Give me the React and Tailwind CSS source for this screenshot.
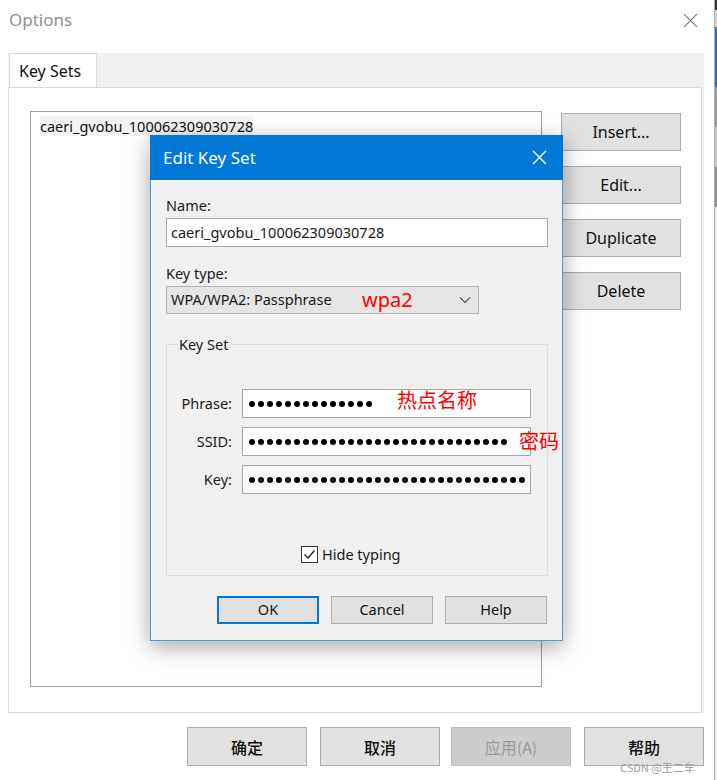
import React from 'react';

const FONT = { fontFamily: '"Noto Sans", "Open Sans", "Noto Sans CJK SC", sans-serif' };

const Btn = ({ children, className = '' }) => (
    <div className={`flex items-center justify-center bg-[#e1e1e1] border border-[#adadad] text-[#111] ${className}`}>
        {children}
    </div>
);

const Dots = ({ count }) => (
    <div className="flex items-center gap-[3px] overflow-hidden">
        {Array.from({ length: count }).map((_, i) => (
            <div key={i} className="w-[6px] h-[6px] shrink-0 rounded-full bg-black" />
        ))}
    </div>
);

const CloseX = ({ size = 14, color = '#666', width = 1.2 }) => (
    <svg width={size} height={size} viewBox="0 0 14 14">
        <path d="M1 1 L13 13 M13 1 L1 13" stroke={color} strokeWidth={width} fill="none" />
    </svg>
);

const EditKeySet = () => (
    <div className="absolute left-[150px] top-[135px] w-[413px] shadow-[0_6px_22px_rgba(0,0,0,0.35)]">
        {/* Title bar */}
        <div className="h-[45px] bg-[#0078d7] flex items-center justify-between pl-[13px] pr-[16px]">
            <span className="text-white text-[17px]">Edit Key Set</span>
            <CloseX size={15} color="#ffffff" width={1.3} />
        </div>

        {/* Body */}
        <div className="bg-[#f0f0f0] border-x border-b border-[#4a9bd9] px-[15px] pt-[16px] pb-[16px] flex flex-col text-[14.5px] text-[#1a1a1a]">
            <div className="h-[18px] leading-[18px]">Name:</div>
            <div className="mt-[4px] h-[29px] w-[382px] bg-white border border-[#a8a8a8] flex items-center pl-[4px]">
                caeri_gvobu_100062309030728
            </div>

            <div className="mt-[17px] h-[18px] leading-[18px]">Key type:</div>
            <div className="relative mt-[4px] h-[28px] w-[313px] bg-[#e5e5e5] border border-[#b4b4b4] flex items-center justify-between pl-[4px] pr-[7px]">
                <span>WPA/WPA2: Passphrase</span>
                <svg width="12" height="8" viewBox="0 0 12 8">
                    <path d="M1 1.5 L6 6.5 L11 1.5" stroke="#555" strokeWidth="1.2" fill="none" />
                </svg>
                <span className="absolute left-[195px] top-[-2px] text-[#ff0000] text-[20px] leading-[30px]">wpa2</span>
            </div>

            {/* Key Set group */}
            <div className="relative mt-[30px] h-[232px] w-[382px] border border-[#dcdcdc] flex flex-col">
                <span className="absolute left-[11px] top-[-10px] bg-[#f0f0f0] px-[1px] leading-[18px]">Key Set</span>

                <div className="mt-[44px] flex flex-col gap-[9px]">
                    <div className="relative flex items-center">
                        <span className="w-[65px] text-right">Phrase:</span>
                        <div className="ml-[10px] h-[29px] w-[289px] bg-white border border-[#a8a8a8] flex items-center pl-[6px]">
                            <Dots count={14} />
                        </div>
                        <span className="absolute left-[230px] top-[-4px] whitespace-nowrap text-[#ff0000] text-[20px] leading-[30px]" style={{ fontFamily: '"Noto Sans CJK SC", sans-serif' }}>热点名称</span>
                    </div>
                    <div className="relative flex items-center">
                        <span className="w-[65px] text-right">SSID:</span>
                        <div className="ml-[10px] h-[29px] w-[289px] bg-white border border-[#a8a8a8] flex items-center pl-[6px]">
                            <Dots count={29} />
                        </div>
                        <span className="absolute left-[352px] top-[-1px] whitespace-nowrap text-[#ff0000] text-[20px] leading-[30px]" style={{ fontFamily: '"Noto Sans CJK SC", sans-serif' }}>密码</span>
                    </div>
                    <div className="flex items-center">
                        <span className="w-[65px] text-right">Key:</span>
                        <div className="ml-[10px] h-[29px] w-[289px] bg-[#f7f7f7] border border-[#a8a8a8] flex items-center pl-[6px] pr-[2px] overflow-hidden">
                            <Dots count={32} />
                        </div>
                    </div>
                </div>

                <div className="mt-[50px] flex items-center pl-[134px]">
                    <div className="w-[17px] h-[17px] bg-white border border-[#333] flex items-center justify-center">
                        <svg width="13" height="11" viewBox="0 0 13 11">
                            <path d="M1.5 5.5 L5 9 L11.5 1.5" stroke="#222" strokeWidth="1.4" fill="none" />
                        </svg>
                    </div>
                    <span className="ml-[4px]">Hide typing</span>
                </div>
            </div>

            {/* Buttons */}
            <div className="mt-[20px] flex justify-end gap-[12px]">
                <div className="w-[102px] h-[28px] bg-[#e1e1e1] border-2 border-[#0078d7] flex items-center justify-center">OK</div>
                <Btn className="w-[102px] h-[28px]">Cancel</Btn>
                <Btn className="w-[102px] h-[28px]">Help</Btn>
            </div>
        </div>
    </div>
);

export default function App() {
    return (
        <div className="relative w-[717px] h-[780px] bg-white overflow-hidden" style={FONT}>
            {/* Window behind, peeking at right edge */}
            <div className="absolute right-0 top-0 w-[3px] h-full border-l border-[#b0b0b0] flex flex-col">
                <div className="h-[10px] bg-[#333]" />
                <div className="h-[17px] bg-[#d8d8d8]" />
                <div className="h-[60px] bg-[#3b6ea8]" />
                <div className="h-[40px] bg-[#9a9a9a]" />
                <div className="h-[40px] bg-[#c8c8c8]" />
                <div className="h-[40px] bg-[#8a8a8a]" />
                <div className="flex-1 bg-[#e8e8e8]" />
            </div>

            {/* Title */}
            <div className="h-[40px] flex items-center justify-between pl-[9px] pr-[19px]">
                <span className="text-[#8f8f8f] text-[17px]">Options</span>
                <CloseX size={15} color="#777" width={1.1} />
            </div>

            {/* Tab control */}
            <div className="mt-[13px] ml-[8px] w-[696px] bg-[#f0f0f0] flex flex-col">
                <div className="h-[35px] flex">
                    <div className="ml-[1px] w-[88px] h-[35px] bg-white border-l border-t border-r border-[#dadada] flex items-center pl-[9px] text-[16px] text-[#111]">
                        Key Sets
                    </div>
                </div>
                <div className="w-[694px] h-[626px] -mt-[1px] bg-white border border-[#dadada] pl-[21px] pt-[23px] flex">
                    <div className="w-[512px] h-[576px] border border-[#a0a0a0] pl-[9px] pt-[4px] text-[14.5px] text-[#111]">
                        <span className="bg-[#f3f3f3]">caeri_gvobu_100062309030728</span>
                    </div>
                    <div className="ml-[19px] mt-[2px] flex flex-col gap-[15px] text-[16px]">
                        <Btn className="w-[120px] h-[38px]">Insert...</Btn>
                        <Btn className="w-[120px] h-[38px]">Edit...</Btn>
                        <Btn className="w-[120px] h-[38px]">Duplicate</Btn>
                        <Btn className="w-[120px] h-[38px]">Delete</Btn>
                    </div>
                </div>
            </div>

            {/* Bottom buttons */}
            <div className="mt-[14px] pl-[187px] flex gap-[13px] text-[16px]" style={{ fontFamily: '"Noto Sans CJK SC", sans-serif' }}>
                <Btn className="w-[120px] h-[39px] font-medium">确定</Btn>
                <Btn className="w-[120px] h-[39px] font-medium">取消</Btn>
                <div className="-ml-[2px] w-[120px] h-[39px] flex items-center justify-center bg-[#cccccc] border border-[#bfbfbf] text-[#9a9a9a]">应用(A)</div>
                <Btn className="w-[120px] h-[39px] font-medium">帮助</Btn>
            </div>

            <span className="absolute left-[620px] top-[759px] text-[11px] text-[#a0a0a0] leading-[16px]" style={{ fontFamily: '"Noto Sans CJK SC", sans-serif' }}>CSDN @王二车</span>

            <EditKeySet />
        </div>
    );
}
